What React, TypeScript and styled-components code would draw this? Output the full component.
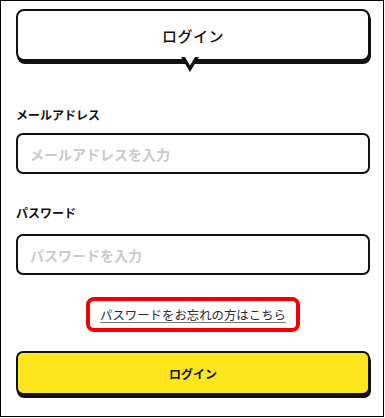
import React from "react";
import styled, { createGlobalStyle } from "styled-components";

const GlobalStyle = createGlobalStyle`
  html, body { margin: 0; padding: 0; background: #fff; }
  body { font-family: "Noto Sans CJK JP", "Noto Sans", sans-serif; color: #111; }
  * { box-sizing: border-box; }
`;

const Frame = styled.div`
  width: 384px;
  height: 417px;
  border: 1px solid #000;
  padding: 8px 13px 0 15px;
  display: flex;
  flex-direction: column;
`;

const Heading = styled.div`
  position: relative;
  height: 52px;
  border: 2px solid #111;
  border-radius: 8px;
  box-shadow: 1px 3px 0 #111;
  display: flex;
  align-items: center;
  justify-content: center;
  background: #fff;
`;

const HeadingText = styled.h1`
  margin: 0;
  font-size: 15px;
  font-weight: 500;
  letter-spacing: 0.5px;
`;

const Tail = styled.svg`
  position: absolute;
  left: 50%;
  bottom: -15px;
  transform: translateX(-50%);
  margin-left: -3px;
`;

const Label = styled.label<{ $top: number }>`
  display: block;
  margin-top: ${(p) => p.$top}px;
  font-size: 12px;
  font-weight: 700;
  line-height: 18px;
`;

const Input = styled.input<{ $top: number }>`
  display: block;
  width: 100%;
  margin-top: ${(p) => p.$top}px;
  height: 41px;
  border: 2.5px solid #111;
  border-radius: 7px;
  padding: 0 12px;
  font-family: inherit;
  font-size: 14px;
  font-weight: 600;
  background: #fff;
  outline: none;
  &::placeholder { color: #cacaca; font-weight: 600; }
`;

const LinkWrap = styled.div`
  display: flex;
  justify-content: center;
  margin-top: 22px;
`;

const LinkBox = styled.div`
  width: 214px;
  height: 35px;
  border: 4px solid #ee0000;
  border-radius: 8px;
  display: flex;
  align-items: center;
  justify-content: center;
`;

const ForgotLink = styled.a`
  font-size: 12.4px;
  color: #2a2a3a;
  text-decoration: underline;
  text-decoration-color: #777;
  text-underline-offset: 2px;
  cursor: pointer;
`;

const SubmitButton = styled.button`
  margin-top: 19px;
  height: 44px;
  width: 100%;
  background: #fde71c;
  border: 2px solid #111;
  border-radius: 7px;
  box-shadow: 1px 3px 0 #111;
  font-family: inherit;
  font-size: 12px;
  font-weight: 700;
  color: #111;
  cursor: pointer;
`;

export default function App() {
  return (
    <>
      <GlobalStyle />
      <Frame>
        <Heading>
          <HeadingText>ログイン</HeadingText>
          <Tail width="18" height="17" viewBox="0 0 18 17">
            <polygon points="0,0 18,0 9,15" fill="#111" />
            <polygon points="4,0 14,0 9,8.5" fill="#fff" />
          </Tail>
        </Heading>
        <Label $top={45}>メールアドレス</Label>
        <Input $top={9} type="email" placeholder="メールアドレスを入力" />
        <Label $top={30}>パスワード</Label>
        <Input $top={12} type="password" placeholder="パスワードを入力" />
        <LinkWrap>
          <LinkBox>
            <ForgotLink>パスワードをお忘れの方はこちら</ForgotLink>
          </LinkBox>
        </LinkWrap>
        <SubmitButton>ログイン</SubmitButton>
      </Frame>
    </>
  );
}
